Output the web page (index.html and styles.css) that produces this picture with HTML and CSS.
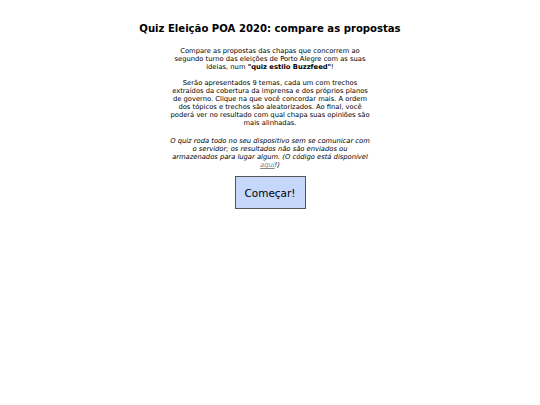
FILE: index.html
```html
<!DOCTYPE html>
<html lang="pt-BR">
<head>
<meta charset="utf-8">
<title>Quiz Eleição POA 2020</title>
<link rel="stylesheet" href="styles.css">
</head>
<body>
<main class="intro">
  <h1 class="title">Quiz Eleição POA 2020: compare as propostas</h1>
  <div class="text">
    <p>Compare as propostas das chapas que concorrem ao segundo turno das eleições de Porto Alegre com as suas ideias, num <b>"quiz estilo Buzzfeed"</b>!</p>
    <p>Serão apresentados 9 temas, cada um com trechos extraídos da cobertura da imprensa e dos próprios planos de governo. Clique na que você concordar mais. A ordem dos tópicos e trechos são aleatorizados. Ao final, você poderá ver no resultado com qual chapa suas opiniões são mais alinhadas.</p>
    <p class="note">O quiz roda todo no seu dispositivo sem se comunicar com o servidor; os resultados não são enviados ou armazenados para lugar algum. (O código está disponível <a href="#">aqui</a>!)</p>
  </div>
  <button class="start">Começar!</button>
</main>
</body>
</html>
```

FILE: styles.css
```css
body {
  margin: 0;
  background: #fff;
  color: #000;
  font-family: "DejaVu Sans", sans-serif;
}

.intro {
  display: flex;
  flex-direction: column;
  align-items: center;
  padding-top: 23px;
}

.title {
  margin: 0 0 12px;
  font-size: 10.1px;
  line-height: 12px;
  font-weight: bold;
}

.text {
  width: 202px;
  font-size: 6.75px;
  line-height: 8px;
  text-align: center;
}

.text p {
  margin: 0 0 8px;
}

.text .note {
  margin-top: 10px;
}

.note {
  font-style: italic;
}

.note a {
  color: #888;
}

.start {
  margin-top: -1px;
  width: 71px;
  height: 33px;
  background: #c5d7fb;
  border: 1px solid #555;
  font-family: "DejaVu Sans", sans-serif;
  font-size: 10.5px;
  color: #000;
  padding: 0;
}
```
